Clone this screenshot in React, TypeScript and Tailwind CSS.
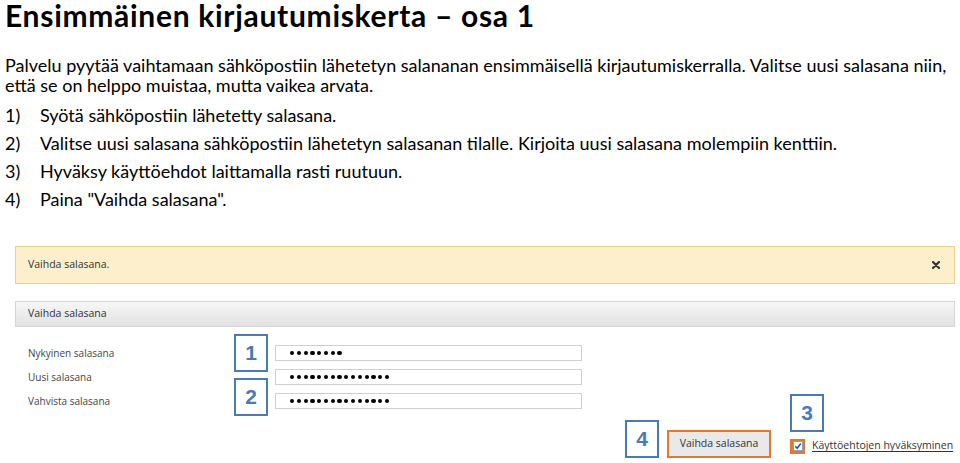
import React from "react";

const body = { fontFamily: "Lato, 'Open Sans', sans-serif" };
const ui = { fontFamily: "'Open Sans', 'Noto Sans', sans-serif" };

function NumBox({ n, className = "" }: { n: string; className?: string }) {
  return (
    <div
      className={`w-[34px] h-[38px] border-2 border-[#4a7ab5] bg-white flex items-center justify-center text-[#4a7ab5] text-[21px] font-bold ${className}`}
      style={{ fontFamily: "'Liberation Sans', Arial, sans-serif" }}
    >
      {n}
    </div>
  );
}

function Pw({ count }: { count: number }) {
  return (
    <div className="w-[307px] h-[16px] border border-[#d0d0d0] bg-white flex items-center pl-[14px]">
      <div className="flex gap-[2.6px]">
        {Array.from({ length: count }).map((_, i) => (
          <span key={i} className="block w-[4.2px] h-[4.2px] rounded-full bg-black" />
        ))}
      </div>
    </div>
  );
}

export default function App() {
  return (
    <div className="w-[960px] h-[463px] overflow-hidden bg-white text-black" style={body}>
      <h1 className="pl-[5px] text-[30px] font-bold leading-[30px] tracking-[0.7px] whitespace-nowrap">
        Ensimmäinen kirjautumiskerta – osa 1
      </h1>
      <p className="pl-[5px] mt-[25px] text-[18px] leading-[20px] whitespace-nowrap">
        Palvelu pyytää vaihtamaan sähköpostiin lähetetyn salananan ensimmäisellä kirjautumiskerralla. Valitse uusi salasana niin,
        <br />
        että se on helppo muistaa, mutta vaikea arvata.
      </p>
      <ol className="mt-[6px] text-[18px] leading-[28px]">
        {[
          "Syötä sähköpostiin lähetetty salasana.",
          "Valitse uusi salasana sähköpostiin lähetetyn salasanan tilalle. Kirjoita uusi salasana molempiin kenttiin.",
          "Hyväksy käyttöehdot laittamalla rasti ruutuun.",
          'Paina "Vaihda salasana".',
        ].map((t, i) => (
          <li key={i} className="flex pl-[5px] whitespace-nowrap">
            <span className="w-[35px] shrink-0">{i + 1})</span>
            <span>{t}</span>
          </li>
        ))}
      </ol>

      <div style={ui}>
        <div className="ml-[15px] mt-[33px] w-[940px] h-[38px] border border-[#e3d68a] bg-[#fdefcb] flex items-center justify-between pl-[12px] pr-[14px] text-[10.5px] text-[#333]">
          <span>Vaihda salasana.</span>
          <svg width="8" height="8" viewBox="0 0 8 8">
            <path d="M1 1 L7 7 M7 1 L1 7" stroke="#333" strokeWidth="2.2" strokeLinecap="round" />
          </svg>
        </div>

        <div className="ml-[15px] mt-[17px] w-[940px] h-[26px] border border-[#d6d6d6] bg-gradient-to-b from-[#f7f7f7] to-[#e2e2e2] flex items-center pl-[12px] text-[10.5px] text-[#333]">
          Vaihda salasana
        </div>

        <div className="mt-[7px] h-[129px] flex">
          <div className="pl-[28px] w-[234px] pt-[11px] flex flex-col gap-[8px] text-[10px] text-[#444]">
            <div className="h-[16px] leading-[16px]">Nykyinen salasana</div>
            <div className="h-[16px] leading-[16px]">Uusi salasana</div>
            <div className="h-[16px] leading-[16px]">Vahvista salasana</div>
          </div>
          <div className="w-[41px] flex flex-col gap-[6px]">
            <NumBox n="1" />
            <NumBox n="2" />
          </div>
          <div className="pt-[11px] flex flex-col gap-[8px]">
            <Pw count={8} />
            <Pw count={15} />
            <Pw count={15} />
          </div>
          <div className="ml-[43px] flex items-end">
            <NumBox n="4" className="mb-[5px]" />
            <div className="ml-[8px] mb-[5px] w-[104px] h-[28px] border-2 border-[#e07a2c] bg-[#e9e9e9] flex items-center justify-center text-[10.5px] text-[#333]">
              Vaihda salasana
            </div>
            <div className="ml-[19px] mb-[9px] flex flex-col">
              <NumBox n="3" />
              <div className="mt-[6px] flex items-center h-[16px] whitespace-nowrap">
                <div className="w-[15px] h-[15px] bg-[#e07a2c] flex items-center justify-center">
                  <div className="w-[10px] h-[10px] bg-white border border-[#8aa0c8] flex items-center justify-center">
                    <svg width="8" height="8" viewBox="0 0 8 8">
                      <path d="M1.2 4.2 L3.2 6.3 L6.8 1.5" stroke="#2b4fa8" strokeWidth="1.5" fill="none" />
                    </svg>
                  </div>
                </div>
                <span className="ml-[7px] text-[10.5px] text-[#333] underline underline-offset-2">
                  Käyttöehtojen hyväksyminen
                </span>
              </div>
            </div>
          </div>
        </div>
      </div>
    </div>
  );
}
